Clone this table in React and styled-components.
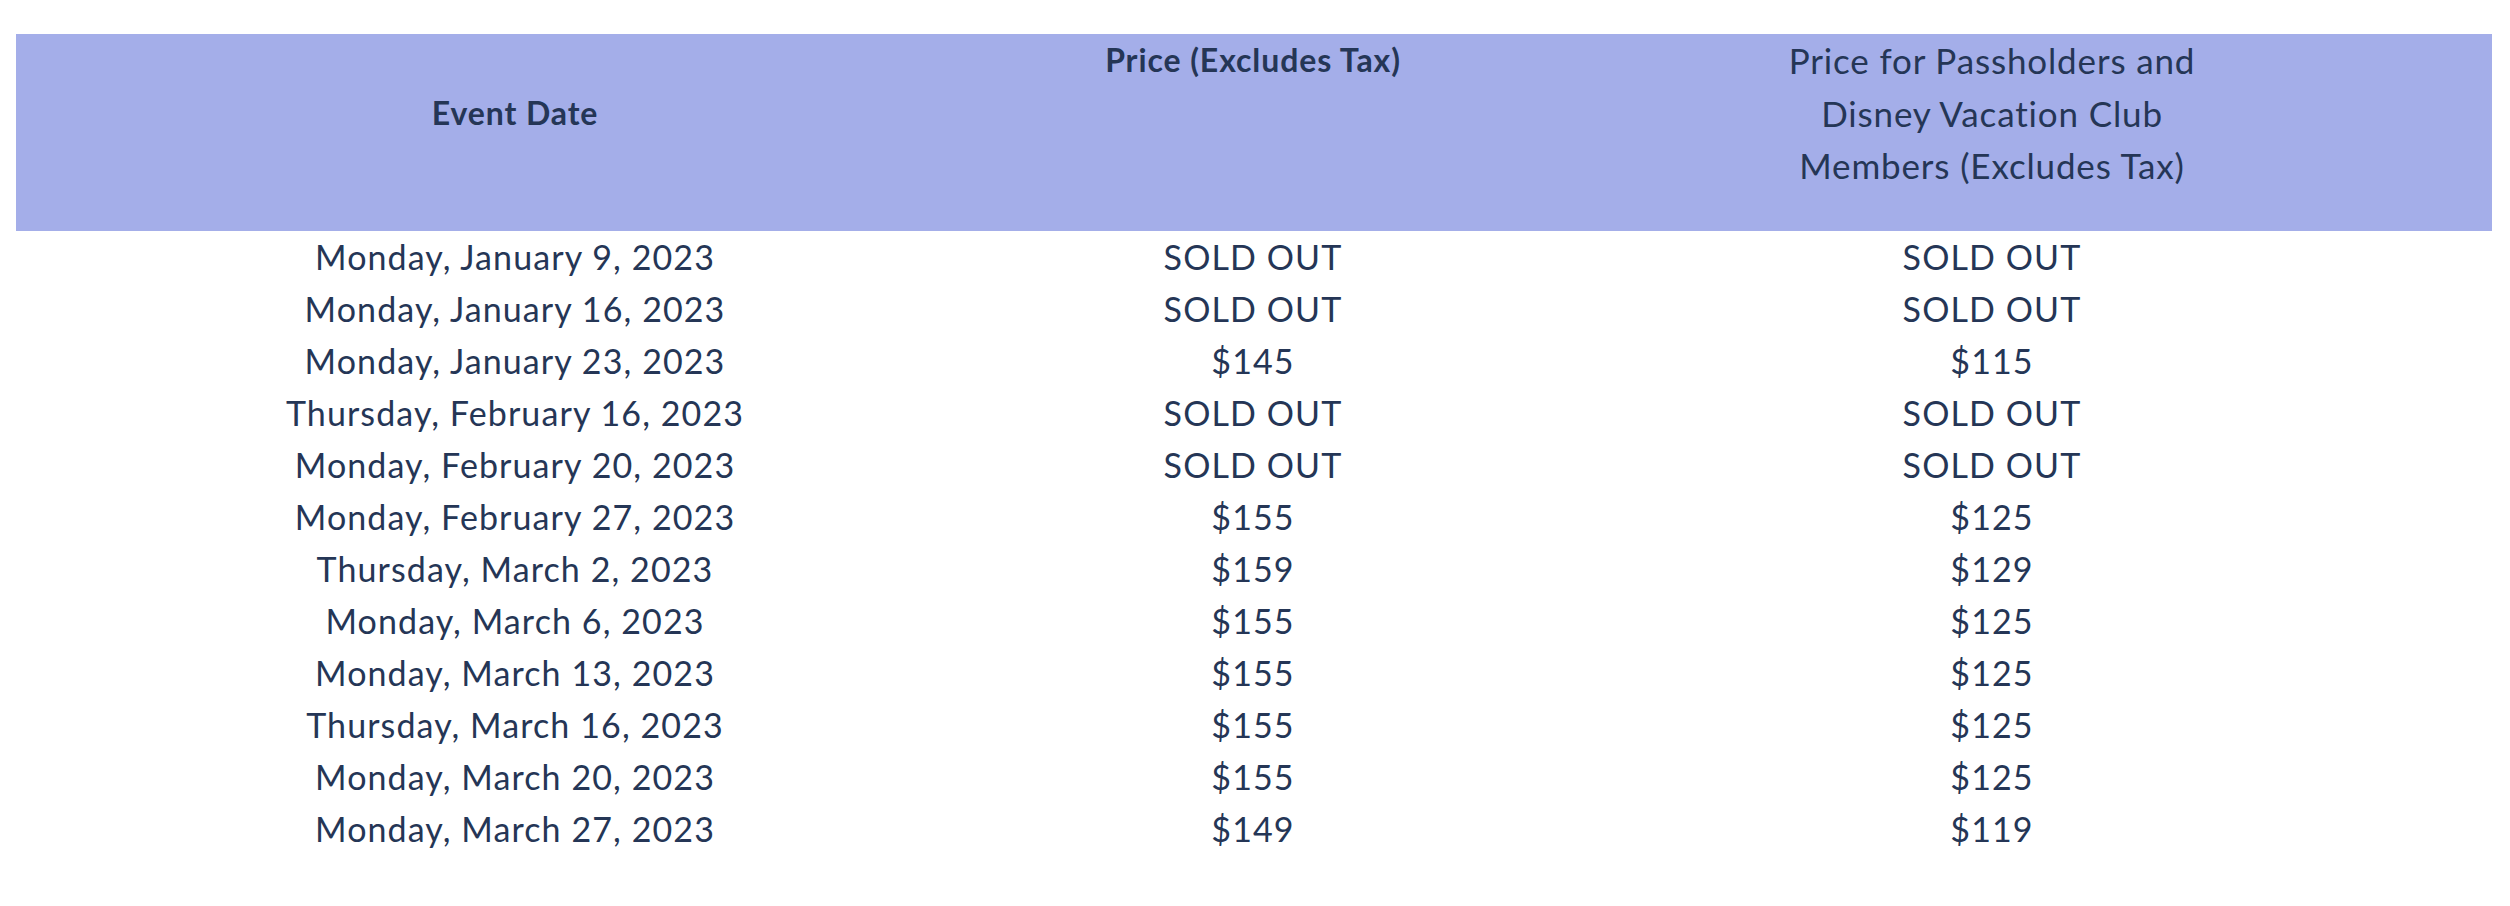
import React from 'react'
import styled, { createGlobalStyle } from 'styled-components'

const GlobalStyle = createGlobalStyle`
  html, body {
    margin: 0;
    padding: 0;
    background: #ffffff;
  }
  body {
    font-family: Lato, "Open Sans", sans-serif;
    color: #253656;
  }
`

const Page = styled.div`
  padding: 34px 18px 40px 16px;
`

const Table = styled.div`
  display: grid;
  grid-template-columns: minmax(0, 998fr) minmax(0, 478fr) minmax(0, 1000fr);
`

const HeadRow = styled.div`
  display: contents;
`

const HeadCell = styled.div`
  background: #a4aee9;
  padding-bottom: 39px;
  display: flex;
  justify-content: center;
  align-items: ${props => props.$align || 'flex-start'};
  text-align: center;
`

const HeadLabel = styled.span`
  font-size: 32px;
  font-weight: 700;
  letter-spacing: 0.9px;
  line-height: 52px;
`

const HeadLong = styled.span`
  font-size: 35px;
  font-weight: 400;
  letter-spacing: 0.85px;
  line-height: 52.5px;
  max-width: 440px;
`

const Cell = styled.div`
  font-size: 34px;
  letter-spacing: 1.1px;
  line-height: 52px;
  text-align: center;
  white-space: nowrap;
`

const rows = [
  ['Monday, January 9, 2023', 'SOLD OUT', 'SOLD OUT'],
  ['Monday, January 16, 2023', 'SOLD OUT', 'SOLD OUT'],
  ['Monday, January 23, 2023', '$145', '$115'],
  ['Thursday, February 16, 2023', 'SOLD OUT', 'SOLD OUT'],
  ['Monday, February 20, 2023', 'SOLD OUT', 'SOLD OUT'],
  ['Monday, February 27, 2023', '$155', '$125'],
  ['Thursday, March 2, 2023', '$159', '$129'],
  ['Monday, March 6, 2023', '$155', '$125'],
  ['Monday, March 13, 2023', '$155', '$125'],
  ['Thursday, March 16, 2023', '$155', '$125'],
  ['Monday, March 20, 2023', '$155', '$125'],
  ['Monday, March 27, 2023', '$149', '$119'],
]

const App = () => {
  return (
    <>
      <GlobalStyle />
      <Page>
        <Table>
          <HeadRow>
            <HeadCell $align="center"><HeadLabel>Event Date</HeadLabel></HeadCell>
            <HeadCell><HeadLabel>Price (Excludes Tax)</HeadLabel></HeadCell>
            <HeadCell>
              <HeadLong>Price for Passholders and Disney Vacation Club Members (Excludes Tax)</HeadLong>
            </HeadCell>
          </HeadRow>
          {rows.map(r => r.map((v, i) => <Cell key={r[0] + i}>{v}</Cell>))}
        </Table>
      </Page>
    </>
  )
}

export default App
